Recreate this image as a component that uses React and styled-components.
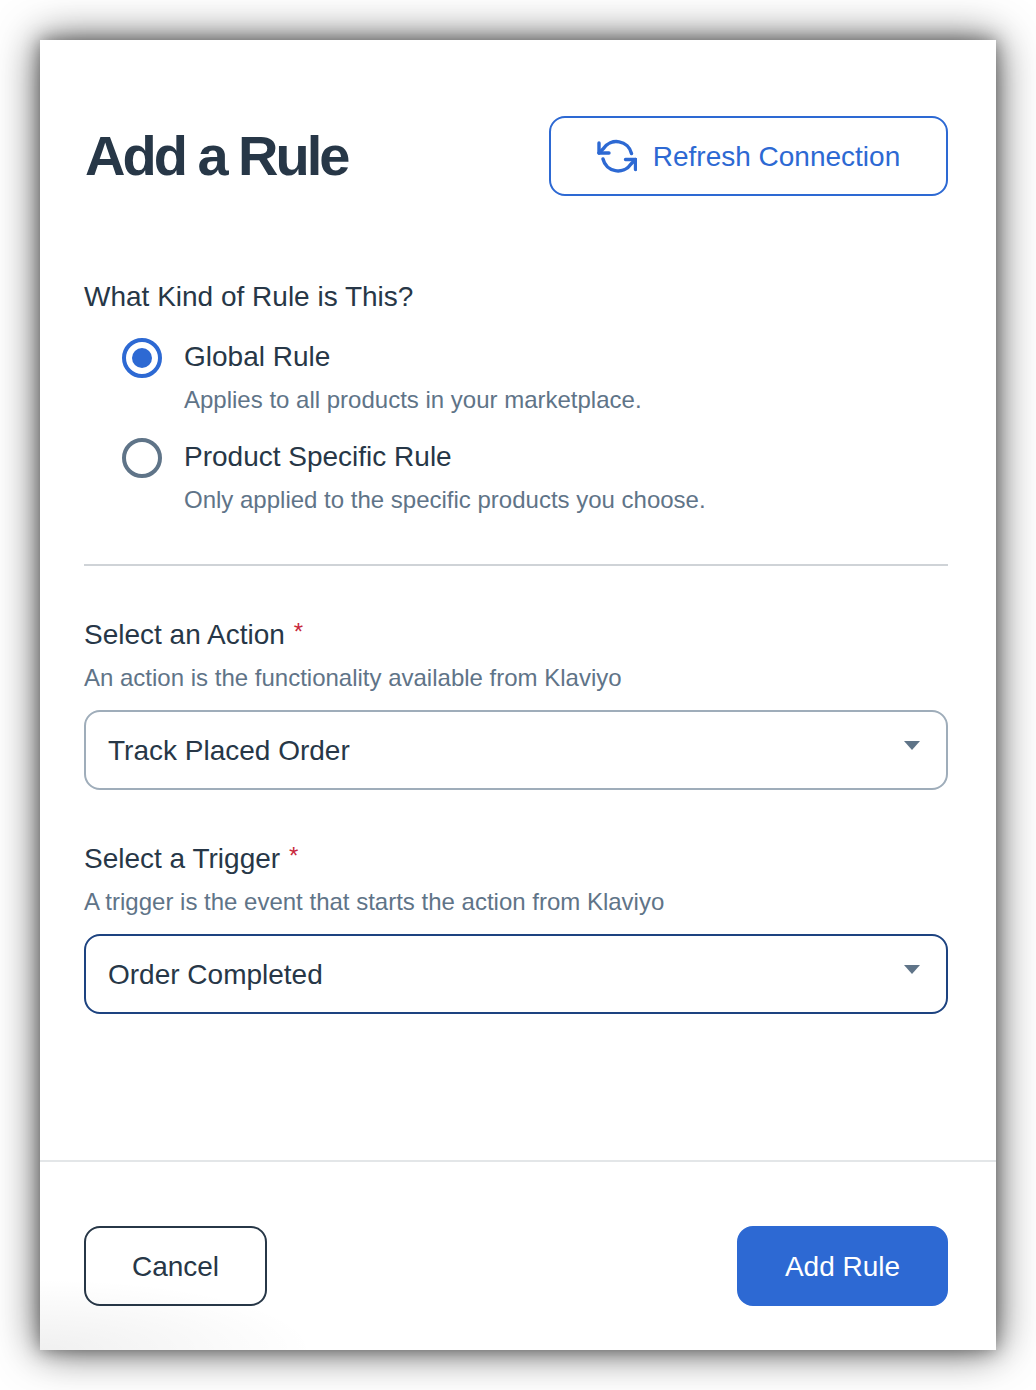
import styled, { createGlobalStyle } from "styled-components";

const GlobalStyle = createGlobalStyle`
  html, body {
    margin: 0;
    padding: 0;
    background: #fff;
    font-family: "Liberation Sans", Arial, sans-serif;
  }
  * { box-sizing: border-box; }
`;

const Page = styled.div`
  width: 1036px;
  height: 1390px;
  padding: 40px;
  background: #fff;
  overflow: hidden;
`;

const Dialog = styled.div`
  position: relative;
  width: 956px;
  height: 1310px;
  background: #fff;
  box-shadow: 0 0 40px rgba(0, 0, 0, 0.7), 0 0 16px rgba(0, 0, 0, 0.35);
  display: flex;
  flex-direction: column;
  overflow: hidden;

  &::after {
    content: "";
    position: absolute;
    left: 0;
    bottom: 0;
    width: 270px;
    height: 70px;
    background: radial-gradient(ellipse at 0% 100%, rgba(0, 0, 0, 0.06), rgba(0, 0, 0, 0) 72%);
    pointer-events: none;
  }
`;

const Body = styled.div`
  flex: 1;
  padding: 76px 48px 0 44px;
`;

const Header = styled.div`
  display: flex;
  justify-content: space-between;
  align-items: center;
  height: 80px;
  margin-bottom: 82px;
`;

const Title = styled.h1`
  margin: 0 0 0 1px;
  font-size: 56px;
  font-weight: 700;
  letter-spacing: -3px;
  line-height: 80px;
  color: #273747;
`;

const Button = styled.button`
  height: 80px;
  width: ${(p) => p.$width}px;
  padding: 2px 0 0;
  display: flex;
  align-items: center;
  justify-content: center;
  gap: 16px;
  font-family: inherit;
  font-size: 28px;
  border-radius: 16px;
  border: 2px solid ${(p) => (p.$variant === "dark" ? "#273747" : "#2d69d3")};
  background: ${(p) => (p.$variant === "solid" ? "#2d69d3" : "#fff")};
  color: ${(p) =>
    p.$variant === "solid" ? "#fff" : p.$variant === "dark" ? "#273747" : "#2d69d3"};
`;

const ButtonIcon = styled.svg`
  margin-top: -2px;
`;

const FieldLabel = styled.div`
  font-size: 28px;
  line-height: 38px;
  color: #273747;
`;

const Star = styled.span`
  color: #c8283c;
  font-size: 24px;
  line-height: 0;
  vertical-align: 4px;
  margin-left: 9px;
`;

const Hint = styled.div`
  font-size: 24px;
  line-height: 40px;
  margin-top: 4px;
  color: #5f7488;
`;

const RadioGroup = styled.div`
  padding-top: 2px;
`;

const RadioRow = styled.div`
  display: flex;
  gap: 22px;
  padding-left: 38px;
  margin-top: 20px;
  height: 80px;
`;

const RadioCircle = styled.span`
  flex: none;
  width: 40px;
  height: 40px;
  border-radius: 50%;
  border: 4px solid ${(p) => (p.$checked ? "#2d69d3" : "#5f7488")};
  display: flex;
  align-items: center;
  justify-content: center;

  &::before {
    content: "";
    width: 20px;
    height: 20px;
    border-radius: 50%;
    background: ${(p) => (p.$checked ? "#2d69d3" : "transparent")};
  }
`;

const Divider = styled.hr`
  margin: 46px 0 50px;
  border: 0;
  height: 2px;
  background: #cfd3d7;
`;

const Select = styled.div`
  height: 80px;
  margin-top: 12px;
  padding: 2px 26px 0 22px;
  display: flex;
  align-items: center;
  justify-content: space-between;
  border-radius: 16px;
  border: 2px solid ${(p) => (p.$focused ? "#1d4380" : "#9fadba")};
  font-size: 28px;
  color: #273747;
`;

const Caret = styled.span`
  width: 0;
  height: 0;
  margin-top: -12px;
  border-left: 8px solid transparent;
  border-right: 8px solid transparent;
  border-top: 9px solid #5f7488;
`;

const Field = styled.div`
  margin-bottom: 50px;
`;

const Footer = styled.div`
  height: 190px;
  padding: 64px 48px 0 44px;
  border-top: 2px solid #e3e6e8;
  display: flex;
  justify-content: space-between;
  align-items: flex-start;
`;

const RefreshIcon = () => (
  <ButtonIcon width="40" height="34" viewBox="0 0 40 34" fill="none" stroke="#2d69d3" strokeWidth="3.4" strokeLinecap="round" strokeLinejoin="round">
    <path d="M2 4v10h10" />
    <path d="M38.5 30.5v-10h-10" />
    <path d="M2 14l4.5-4.5A15.5 15.5 0 0 1 34.5 14.5" />
    <path d="M38.5 20.5L34 25A15.5 15.5 0 0 1 6 20" />
  </ButtonIcon>
);

const Radio = ({ checked, title, hint }) => (
  <RadioRow>
    <RadioCircle $checked={checked} />
    <div>
      <FieldLabel>{title}</FieldLabel>
      <Hint>{hint}</Hint>
    </div>
  </RadioRow>
);

const App = () => (
  <>
    <GlobalStyle />
    <Page>
      <Dialog>
        <Body>
          <Header>
            <Title>Add a Rule</Title>
            <Button $width={399}>
              <RefreshIcon />
              Refresh Connection
            </Button>
          </Header>
          <FieldLabel>What Kind of Rule is This?</FieldLabel>
          <RadioGroup>
            <Radio
              checked
              title="Global Rule"
              hint="Applies to all products in your marketplace."
            />
            <Radio
              title="Product Specific Rule"
              hint="Only applied to the specific products you choose."
            />
          </RadioGroup>
          <Divider />
          <Field>
            <FieldLabel>
              Select an Action<Star>*</Star>
            </FieldLabel>
            <Hint>An action is the functionality available from Klaviyo</Hint>
            <Select>
              Track Placed Order
              <Caret />
            </Select>
          </Field>
          <Field>
            <FieldLabel>
              Select a Trigger<Star>*</Star>
            </FieldLabel>
            <Hint>A trigger is the event that starts the action from Klaviyo</Hint>
            <Select $focused>
              Order Completed
              <Caret />
            </Select>
          </Field>
        </Body>
        <Footer>
          <Button $width={183} $variant="dark">
            Cancel
          </Button>
          <Button $width={211} $variant="solid">
            Add Rule
          </Button>
        </Footer>
      </Dialog>
    </Page>
  </>
);

export default App;
